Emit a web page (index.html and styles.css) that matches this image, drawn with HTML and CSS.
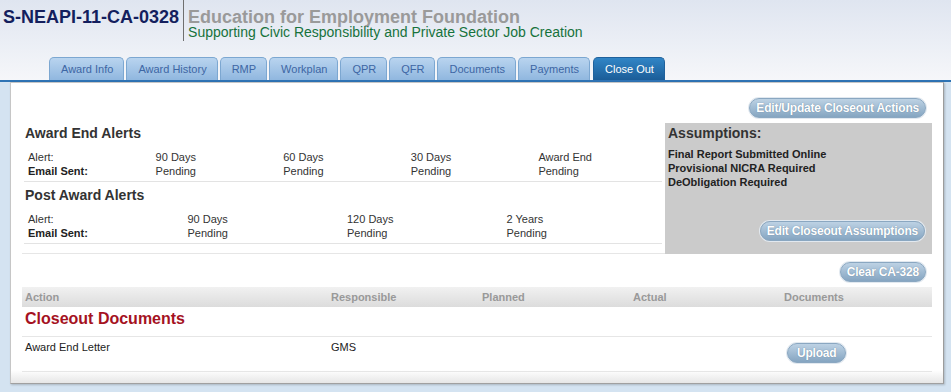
FILE: index.html
```html
<!DOCTYPE html>
<html lang="en">
<head>
    <meta charset="UTF-8">
    <meta name="viewport" content="width=device-width, initial-scale=1.0">
    <title>S-NEAPI-11-CA-0328 - Close Out</title>
    <link rel="stylesheet" href="styles.css">
</head>
<body>

    <!-- Award header and tabs -->
    <div class="masthead">
        <div class="title-row">
            <div class="award-id">S-NEAPI-11-CA-0328</div>
            <div class="org">
                <div class="org-name">Education for Employment Foundation</div>
                <div class="org-tagline">Supporting Civic Responsibility and Private Sector Job Creation</div>
            </div>
        </div>
        <ul class="tabs">
            <li class="tab">Award Info</li>
            <li class="tab">Award History</li>
            <li class="tab">RMP</li>
            <li class="tab">Workplan</li>
            <li class="tab">QPR</li>
            <li class="tab">QFR</li>
            <li class="tab">Documents</li>
            <li class="tab">Payments</li>
            <li class="tab active">Close Out</li>
        </ul>
    </div>

    <div class="panel">
        <div class="button-bar">
            <button class="btn">Edit/Update Closeout Actions</button>
        </div>

        <div class="alerts-row">
            <!-- Alerts -->
            <div class="alerts">
                <h2 class="section-title">Award End Alerts</h2>
                <table class="alert-table">
                    <tr>
                        <td>Alert:</td>
                        <td>90 Days</td>
                        <td>60 Days</td>
                        <td>30 Days</td>
                        <td>Award End</td>
                    </tr>
                    <tr>
                        <th>Email Sent:</th>
                        <td>Pending</td>
                        <td>Pending</td>
                        <td>Pending</td>
                        <td>Pending</td>
                    </tr>
                </table>

                <h2 class="section-title post">Post Award Alerts</h2>
                <table class="alert-table">
                    <tr>
                        <td>Alert:</td>
                        <td>90 Days</td>
                        <td>120 Days</td>
                        <td>2 Years</td>
                    </tr>
                    <tr>
                        <th>Email Sent:</th>
                        <td>Pending</td>
                        <td>Pending</td>
                        <td>Pending</td>
                    </tr>
                </table>
            </div>

            <!-- Assumptions -->
            <div class="assumptions">
                <h2 class="section-title">Assumptions:</h2>
                <ul class="assumption-list">
                    <li>Final Report Submitted Online</li>
                    <li>Provisional NICRA Required</li>
                    <li>DeObligation Required</li>
                </ul>
                <div class="assumptions-foot">
                    <button class="btn">Edit Closeout Assumptions</button>
                </div>
            </div>
        </div>

        <div class="button-bar clear-bar">
            <button class="btn">Clear CA-328</button>
        </div>

        <!-- Closeout actions -->
        <table class="closeout-table">
            <colgroup>
                <col class="col-action">
                <col>
                <col>
                <col>
                <col>
            </colgroup>
            <thead>
                <tr>
                    <th>Action</th>
                    <th>Responsible</th>
                    <th>Planned</th>
                    <th>Actual</th>
                    <th>Documents</th>
                </tr>
            </thead>
            <tbody>
                <tr class="group-row">
                    <td colspan="5">Closeout Documents</td>
                </tr>
                <tr>
                    <td>Award End Letter</td>
                    <td>GMS</td>
                    <td></td>
                    <td></td>
                    <td class="upload-cell"><button class="btn btn-upload">Upload</button></td>
                </tr>
            </tbody>
        </table>
    </div>

</body>
</html>
```

FILE: styles.css
```css
body {
    margin: 0;
    font-family: "Liberation Sans", Arial, sans-serif;
    color: #333;
    background: #d4e3f1;
    min-height: 392px;
}

/* Header */
.masthead {
    background: linear-gradient(#dfe5f0, #f6f7fa);
}

.title-row {
    display: flex;
    align-items: flex-start;
    padding-left: 3px;
}

.award-id {
    padding-top: 10px;
    margin-right: 4px;
    font-size: 18px;
    font-weight: bold;
    line-height: 15px;
    color: #141f5e;
}

.org {
    border-left: 1px solid #6f6f6f;
    padding: 10px 0 2px 4px;
}

.org-name {
    font-size: 18px;
    font-weight: bold;
    line-height: 15px;
    color: #9a9a9a;
}

.org-tagline {
    font-size: 14px;
    line-height: 14px;
    color: #16723c;
}

.tabs {
    display: flex;
    gap: 2px;
    list-style: none;
    margin: 16px 0 0;
    padding: 0 0 0 49px;
    border-bottom: 2px solid #2e73b4;
}

.tab {
    height: 22px;
    padding: 0 10px 0 11px;
    font-size: 11px;
    line-height: 22px;
    color: #3d66a4;
    background: linear-gradient(#b9d4ef, #90b7df);
    border: 1px solid #7ca7d1;
    border-bottom: none;
    border-radius: 5px 5px 0 0;
}

.tab.active {
    margin-left: 1px;
    color: #fff;
    background: linear-gradient(#3185c6, #1b5d98);
    border-color: #1f619c;
}

/* Main panel */
.panel {
    margin: 0 7px 0 10px;
    padding: 0 11px 11px;
    background: linear-gradient(#fff calc(100% - 13px), #e6e6e6);
    border: 1px solid #c6c6c6;
    border-right-color: #9c9c9c;
    border-bottom-color: #a0a0a0;
    box-shadow: 1px 1px 2px rgba(0, 0, 0, 0.2);
}

.button-bar {
    display: flex;
    justify-content: flex-end;
    padding: 15px 6px 0 0;
}

.clear-bar {
    padding-top: 8px;
    margin-bottom: 5px;
}

.btn {
    height: 20px;
    padding: 0 6px;
    font-family: "Liberation Sans", Arial, sans-serif;
    font-size: 12px;
    font-weight: bold;
    letter-spacing: -0.2px;
    line-height: 18px;
    color: #fff;
    text-shadow: 0 0 1px rgba(50, 80, 110, 0.6);
    background: linear-gradient(#bdd2e4, #85a5c1);
    border: 1px solid #8aa7c1;
    border-radius: 10px;
    box-shadow: 0 0 0 1px #e2e9f0;
}

.btn-upload {
    padding: 0 9px;
}

/* Alerts and assumptions */
.alerts-row {
    display: flex;
    margin-top: 5px;
}

.alerts {
    flex: 1;
    padding: 1px 3px 9px 2px;
    border-bottom: 1px solid #e6e6e6;
}

.section-title {
    margin: 0 0 0 1px;
    font-size: 14px;
    font-weight: bold;
    line-height: 18px;
    color: #333;
}

.section-title.post {
    margin-top: 4px;
}

.alert-table {
    width: 100%;
    table-layout: fixed;
    border-collapse: collapse;
    margin-top: 8px;
    border-bottom: 1px solid #e3e3e3;
}

.alert-table td,
.alert-table th {
    padding: 0 4px;
    font-size: 11px;
    line-height: 14px;
    text-align: left;
    color: #333;
}

.alert-table th {
    font-weight: bold;
    color: #222;
}

.alert-table tr:last-child td,
.alert-table tr:last-child th {
    padding-bottom: 3px;
}

.assumptions {
    width: 265px;
    display: flex;
    flex-direction: column;
    padding: 1px 0 0 2px;
    background: #cbcbcb;
}

.assumption-list {
    list-style: none;
    margin: 5px 0 0 1px;
    padding: 0;
    font-size: 11px;
    font-weight: bold;
    line-height: 14px;
    color: #222;
}

.assumptions-foot {
    margin-top: auto;
    display: flex;
    justify-content: flex-end;
    padding: 0 7px 13px 0;
}

/* Closeout table */
.closeout-table {
    width: 100%;
    table-layout: fixed;
    border-collapse: collapse;
}

.col-action {
    width: 306px;
}

.closeout-table th {
    height: 20px;
    padding: 0 3px;
    font-size: 11px;
    font-weight: bold;
    line-height: 20px;
    text-align: left;
    color: #999;
    background: linear-gradient(#f1f1f1, #dcdcdc);
}

.closeout-table td {
    padding: 3px 3px 0;
    font-size: 11px;
    line-height: 14px;
    vertical-align: top;
    color: #222;
    border-bottom: 1px solid #e6e6e6;
}

.closeout-table .group-row td {
    padding: 2px 3px 7px;
    font-size: 16px;
    font-weight: bold;
    line-height: 20px;
    color: #a5121f;
}

.closeout-table .upload-cell {
    padding: 6px 3px 8px 6px;
}
```
